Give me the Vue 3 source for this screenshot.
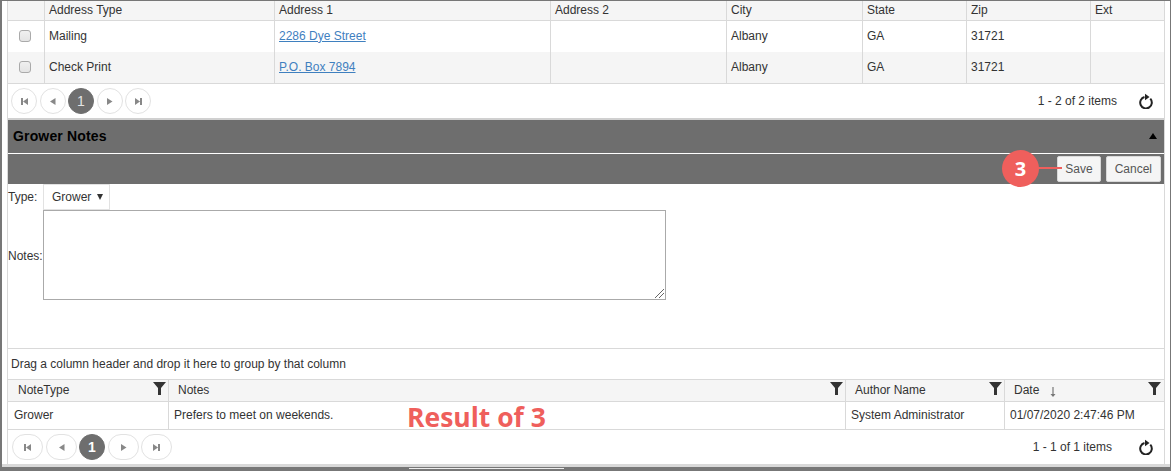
<script setup>
const addressCols = ['Address Type', 'Address 1', 'Address 2', 'City', 'State', 'Zip', 'Ext']
const addresses = [
  { type: 'Mailing', line1: '2286 Dye Street', city: 'Albany', state: 'GA', zip: '31721' },
  { type: 'Check Print', line1: 'P.O. Box 7894', city: 'Albany', state: 'GA', zip: '31721' }
]
const noteCols = [
  { text: 'NoteType' },
  { text: 'Notes' },
  { text: 'Author Name' },
  { text: 'Date', sorted: true }
]
</script>

<template>
  <div class="frame">
    <div class="panel">
      <div class="addrGrid addrHead">
        <div class="cell"></div>
        <div v-for="c in addressCols" :key="c" class="cell">{{ c }}</div>
      </div>
      <div
        v-for="(a, i) in addresses"
        :key="a.type"
        :class="['addrGrid', 'addrRow', { 'addrRow--alt': i === 1 }]"
      >
        <div class="cell cell--check"><span class="check"></span></div>
        <div class="cell">{{ a.type }}</div>
        <div class="cell"><a class="link">{{ a.line1 }}</a></div>
        <div class="cell"></div>
        <div class="cell">{{ a.city }}</div>
        <div class="cell">{{ a.state }}</div>
        <div class="cell">{{ a.zip }}</div>
        <div class="cell"></div>
      </div>

      <div class="pager pager--top">
        <div class="pagerBtns">
          <span class="pageBtn"><svg width="9" height="9" viewBox="0 0 9 9"><path d="M1 1h2v7H1zM8 1v7L3 4.500z" /></svg></span>
          <span class="pageBtn"><svg width="9" height="9" viewBox="0 0 9 9"><path d="M7.500 1v7L2 4.500z" /></svg></span>
          <span class="pageBtn pageBtn--on">1</span>
          <span class="pageBtn"><svg width="9" height="9" viewBox="0 0 9 9"><path d="M2 1v7l5.500-3.500z" /></svg></span>
          <span class="pageBtn"><svg width="9" height="9" viewBox="0 0 9 9"><path d="M1 1v7l5-3.500zM6 1h2v7H6z" /></svg></span>
        </div>
        <span class="pagerInfo">1 - 2 of 2 items</span>
        <svg class="refresh" width="16" height="16" viewBox="0 0 16 16"><path d="M12.300 5.700A5.800 5.800 0 1 1 6.500 4" fill="none" stroke="#222" stroke-width="2" /><path d="M7 0.800v6.400L11.500 4z" fill="#222" /></svg>
      </div>

      <div class="sectionBar">
        <span class="sectionTitle">Grower Notes</span>
        <span class="sectionCaret"></span>
      </div>
      <div class="toolbar">
        <button type="button" class="toolBtn toolBtn--save">Save</button>
        <button type="button" class="toolBtn">Cancel</button>
      </div>

      <div class="form">
        <div class="formRow">
          <label class="formLabel">Type:</label>
          <div class="select">Grower <span class="selectCaret"></span></div>
        </div>
        <div class="formRow formRow--notes">
          <label class="formLabel">Notes:</label>
          <div class="textarea">
            <svg class="grip" width="9" height="9" viewBox="0 0 9 9"><path d="M0 9L9 0M4 9L9 4" stroke="#666" fill="none" /></svg>
          </div>
        </div>
      </div>

      <div class="groupBar">Drag a column header and drop it here to group by that column</div>
      <div class="noteGrid noteHead">
        <div v-for="c in noteCols" :key="c.text" class="noteTh">
          <span>{{ c.text }}</span>
          <svg v-if="c.sorted" class="sortArrow" width="8" height="12" viewBox="0 0 8 12"><path d="M4 1v9" stroke="#777" stroke-width="1.200" fill="none" /><path d="M1.500 8L4 11l2.500-3z" fill="#777" /></svg>
          <svg class="funnel" width="13" height="13" viewBox="0 0 13 13"><path d="M0 0h13L8 6v7H5V6z" fill="#333" /></svg>
        </div>
      </div>
      <div class="noteGrid noteRow">
        <div class="cell">Grower</div>
        <div class="cell">Prefers to meet on weekends.</div>
        <div class="cell">System Administrator</div>
        <div class="cell">01/07/2020 2:47:46 PM</div>
      </div>

      <div class="pager pager--bottom">
        <div class="pagerBtns pagerBtns--wide">
          <span class="pageBtn"><svg width="9" height="9" viewBox="0 0 9 9"><path d="M1 1h2v7H1zM8 1v7L3 4.500z" /></svg></span>
          <span class="pageBtn"><svg width="9" height="9" viewBox="0 0 9 9"><path d="M7.500 1v7L2 4.500z" /></svg></span>
          <span class="pageBtn pageBtn--on">1</span>
          <span class="pageBtn"><svg width="9" height="9" viewBox="0 0 9 9"><path d="M2 1v7l5.500-3.500z" /></svg></span>
          <span class="pageBtn"><svg width="9" height="9" viewBox="0 0 9 9"><path d="M1 1v7l5-3.500zM6 1h2v7H6z" /></svg></span>
        </div>
        <span class="pagerInfo">1 - 1 of 1 items</span>
        <svg class="refresh" width="16" height="16" viewBox="0 0 16 16"><path d="M12.300 5.700A5.800 5.800 0 1 1 6.500 4" fill="none" stroke="#222" stroke-width="2" /><path d="M7 0.800v6.400L11.500 4z" fill="#222" /></svg>
      </div>
    </div>
    <div class="bottomEdge"><span class="bottomThumb"></span></div>

    <!-- annotation overlays -->
    <div class="callout">3</div>
    <div class="calloutLine"></div>
    <div class="resultText">Result of 3</div>
  </div>
</template>

<style>
html, body {
  margin: 0;
  background: #fff;
}
</style>

<style scoped>
.frame {
  position: relative;
  width: 1171px;
  height: 471px;
  box-sizing: border-box;
  border-top: 1px solid #777;
  border-left: 2px solid #777;
  border-right: 1px solid #777;
  padding-left: 5px;
  padding-right: 5px;
  font-family: "Liberation Sans", Arial, sans-serif;
  font-size: 12px;
  color: #333;
  overflow: hidden;
}

.panel {
  height: 463px;
  box-sizing: border-box;
  border-left: 1px solid #d9d9d9;
  border-right: 1px solid #d9d9d9;
  display: flex;
  flex-direction: column;
}

.addrGrid {
  display: grid;
  grid-template-columns: 36px 230px 276px 176px 136px 104px 124px 1fr;
  box-sizing: border-box;
  flex-shrink: 0;
}

.addrHead {
  height: 20px;
  background: #f5f5f5;
  border-bottom: 1px solid #d9d9d9;
}

.addrRow {
  height: 31px;
}

.addrRow--alt {
  height: 32px;
  background: #f5f5f5;
  border-bottom: 1px solid #d9d9d9;
}

.addrGrid .cell {
  padding-left: 4px;
  padding-bottom: 2px;
}

.cell {
  display: flex;
  align-items: center;
  box-sizing: border-box;
  padding-left: 5px;
  padding-bottom: 2px;
  border-left: 1px solid #d9d9d9;
  min-width: 0;
  white-space: nowrap;
}

.cell:first-child {
  border-left: 0;
  padding-left: 6px;
}

.addrGrid .cell--check {
  justify-content: center;
  padding-left: 0;
  padding-right: 2px;
}

.check {
  width: 10px;
  height: 10px;
  border: 1px solid #aaa;
  border-radius: 3px;
  background: linear-gradient(#f0f0f0, #e4e4e4);
}

.link {
  color: #3f80bf;
  text-decoration: underline;
}

.pager {
  display: flex;
  align-items: center;
  flex-shrink: 0;
  box-sizing: border-box;
}

.pager--top {
  height: 34px;
  padding: 0 10px 0 3px;
}

.pager--bottom {
  height: 34px;
  padding: 0 10px 0 4px;
}

.pagerBtns {
  display: flex;
  gap: 2.500px;
  margin-right: auto;
}

.pageBtn {
  width: 26px;
  height: 26px;
  box-sizing: border-box;
  border: 1px solid #e2e2e2;
  border-radius: 50%;
  display: flex;
  align-items: center;
  justify-content: center;
  color: #e4e4e4;
  font-size: 14px;
  fill: #888;
}

.pagerBtns--wide .pageBtn {
  width: 31px;
  border-radius: 13px;
}

.pageBtn--on {
  background: #6e6e6e;
  border-color: #6e6e6e;
}

.pagerBtns--wide .pageBtn--on {
  width: 26px;
  color: #fff;
  font-weight: bold;
}

.pagerInfo {
  margin-right: 21px;
}

.pager--bottom .pagerInfo {
  margin-right: 26px;
}

.refresh {
  margin-top: -1px;
}

.sectionBar {
  height: 35px;
  box-sizing: border-box;
  border-top: 2px solid #d0d0d0;
  background: #6e6e6e;
  display: flex;
  align-items: center;
  justify-content: space-between;
  padding: 0 7px 2px 5px;
  flex-shrink: 0;
}

.sectionTitle {
  color: #000;
  font-size: 14px;
  font-weight: bold;
  letter-spacing: 0.150px;
}

.sectionCaret {
  border-left: 4px solid transparent;
  border-right: 4px solid transparent;
  border-bottom: 6px solid #000;
}

.toolbar {
  height: 30px;
  margin-top: 1px;
  background: #6e6e6e;
  display: flex;
  justify-content: flex-end;
  align-items: center;
  gap: 5px;
  padding-right: 3px;
  flex-shrink: 0;
}

.toolBtn {
  height: 26px;
  box-sizing: border-box;
  padding: 0 8px;
  border: 1px solid #d9d9d9;
  border-radius: 2px;
  background: #f5f5f5;
  color: #555;
  font-family: inherit;
  font-size: 12px;
}

.toolBtn--save {
  padding: 0 7px;
}

.form {
  height: 165px;
  flex-shrink: 0;
  border-bottom: 1px solid #d9d9d9;
  box-sizing: border-box;
}

.formRow {
  display: flex;
  align-items: center;
  height: 26px;
}

.formRow--notes {
  height: 90px;
}

.formRow--notes .formLabel {
  padding-top: 2px;
}

.formLabel {
  width: 35px;
  flex-shrink: 0;
}

.select {
  width: 67px;
  height: 26px;
  box-sizing: border-box;
  border: 1px solid #e2e2e2;
  display: flex;
  align-items: center;
  gap: 6px;
  padding-left: 8px;
}

.selectCaret {
  border-left: 3.500px solid transparent;
  border-right: 3.500px solid transparent;
  border-top: 6px solid #333;
}

.textarea {
  position: relative;
  width: 623px;
  height: 90px;
  box-sizing: border-box;
  border: 1px solid #aaa;
}

.grip {
  position: absolute;
  right: 1px;
  bottom: 1px;
}

.groupBar {
  height: 31px;
  box-sizing: border-box;
  padding-left: 3px;
  display: flex;
  align-items: center;
  border-bottom: 1px solid #d9d9d9;
  flex-shrink: 0;
}

.noteGrid {
  display: grid;
  grid-template-columns: 160px 677px 159px 1fr;
  flex-shrink: 0;
  box-sizing: border-box;
}

.noteHead {
  height: 22px;
  background: #f5f5f5;
  border-bottom: 1px solid #d9d9d9;
}

.noteTh {
  display: flex;
  align-items: center;
  padding: 0 2px 2px 9px;
  border-left: 1px solid #d9d9d9;
  gap: 10px;
}

.noteTh:first-child {
  border-left: 0;
  padding-left: 10px;
}

.noteTh:last-child {
  padding-right: 3px;
}

.funnel {
  margin-left: auto;
  margin-top: -2px;
}

.sortArrow {
  margin-top: 5px;
}

.noteRow {
  height: 28px;
  border-bottom: 1px solid #d9d9d9;
}

.bottomEdge {
  height: 7px;
  box-sizing: border-box;
  border-top: 3px solid #d9d9d9;
  background: #777;
  position: relative;
  margin: 0 -5px;
}

.bottomThumb {
  position: absolute;
  left: 407px;
  width: 155px;
  top: 1px;
  height: 1px;
  background: #eee;
}

.callout {
  position: absolute;
  left: 1000px;
  top: 149px;
  width: 37px;
  height: 37px;
  border-radius: 50%;
  background: #ef5f5c;
  color: #fff;
  font-family: "Open Sans", sans-serif;
  font-weight: bold;
  font-size: 20px;
  display: flex;
  align-items: center;
  justify-content: center;
}

.calloutLine {
  position: absolute;
  left: 1035px;
  top: 166px;
  width: 25px;
  height: 2px;
  background: #ef5f5c;
}

.resultText {
  position: absolute;
  left: 405px;
  top: 398px;
  color: #ef5f5c;
  font-family: "Open Sans", sans-serif;
  font-weight: bold;
  font-size: 26.500px;
  white-space: nowrap;
}
</style>
